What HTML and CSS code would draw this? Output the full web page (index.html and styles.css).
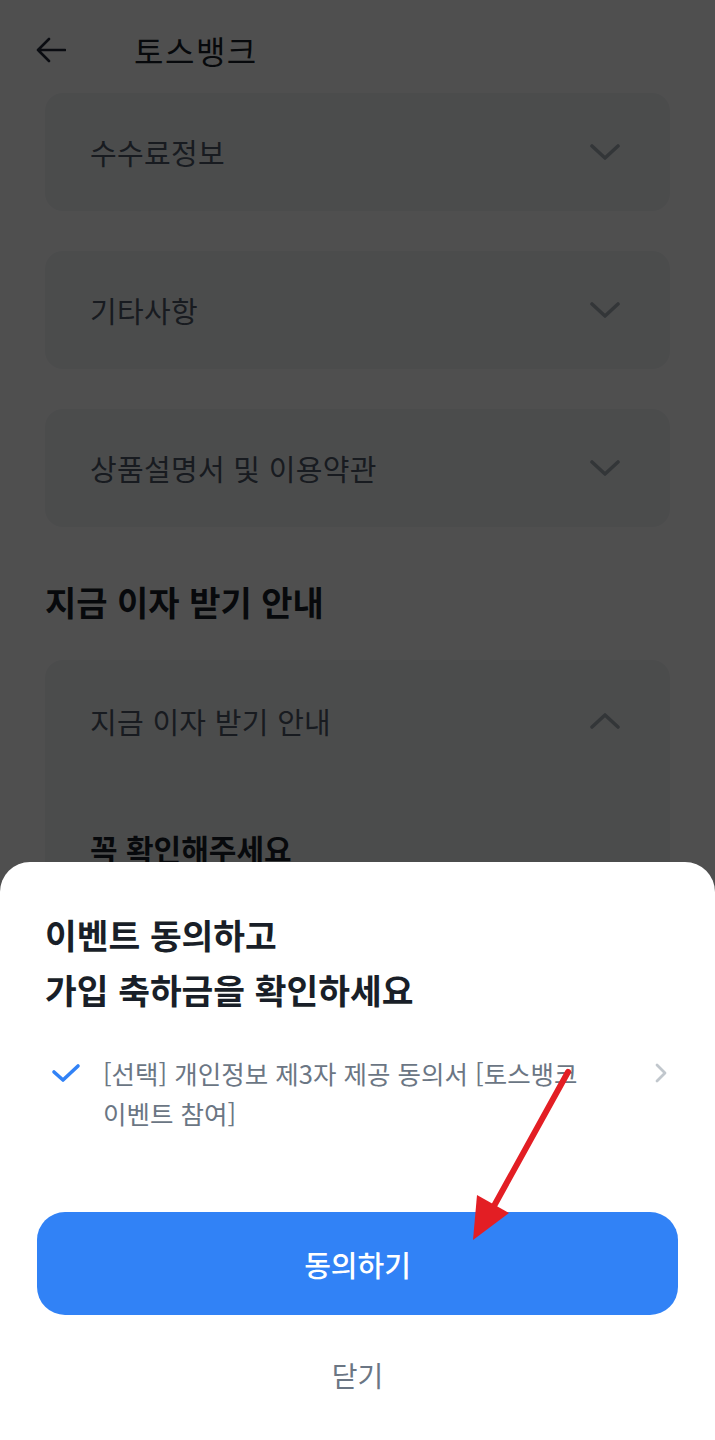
FILE: index.html
```html
<!DOCTYPE html>
<html lang="ko">
<head>
  <meta charset="UTF-8" />
  <meta name="viewport" content="width=device-width, initial-scale=1.0" />
  <title>토스뱅크</title>
  <link rel="stylesheet" href="styles.css">
</head>
<body>
  <header class="topbar">
    <button class="back" aria-label="뒤로">
      <svg width="30" height="28" viewBox="0 0 30 28">
        <path d="M2 14 H29 M13 3 L2 14 L13 25" fill="none" stroke="currentColor" stroke-width="2.6" stroke-linecap="round" stroke-linejoin="round"/>
      </svg>
    </button>
    <h1>토스뱅크</h1>
  </header>

  <main class="content">
    <div class="accordion">
      <div class="accordion-head">
        <span>수수료정보</span>
        <svg class="chev" width="30" height="16" viewBox="0 0 30 16"><path d="M2 2 L15 14 L28 2" /></svg>
      </div>
    </div>
    <div class="accordion">
      <div class="accordion-head">
        <span>기타사항</span>
        <svg class="chev" width="30" height="16" viewBox="0 0 30 16"><path d="M2 2 L15 14 L28 2" /></svg>
      </div>
    </div>
    <div class="accordion">
      <div class="accordion-head">
        <span>상품설명서 및 이용약관</span>
        <svg class="chev" width="30" height="16" viewBox="0 0 30 16"><path d="M2 2 L15 14 L28 2" /></svg>
      </div>
    </div>

    <h2 class="section-title">지금 이자 받기 안내</h2>

    <div class="accordion open">
      <div class="accordion-head tall">
        <span>지금 이자 받기 안내</span>
        <svg class="chev" width="30" height="16" viewBox="0 0 30 16"><path d="M2 14 L15 2 L28 14" /></svg>
      </div>
      <div class="accordion-body">
        <h3>꼭 확인해주세요</h3>
      </div>
    </div>
  </main>

  <div class="dim"></div>

  <section class="sheet">
    <h2 class="sheet-title">이벤트 동의하고<br>가입 축하금을 확인하세요</h2>

    <div class="agree-row">
      <svg class="check" width="30" height="20" viewBox="0 0 30 20">
        <path d="M3 9 L12 17 L27 3" fill="none" stroke="#3182f6" stroke-width="3.6" stroke-linecap="round" stroke-linejoin="round"/>
      </svg>
      <p class="agree-text">[선택] 개인정보 제3자 제공 동의서 [토스뱅크 이벤트 참여]</p>
      <svg class="more" width="14" height="22" viewBox="0 0 14 22">
        <path d="M3 3 L11 11 L3 19" fill="none" stroke="#c1c7cd" stroke-width="2.8" stroke-linecap="round" stroke-linejoin="round"/>
      </svg>
    </div>

    <button class="btn-primary">동의하기</button>
    <button class="btn-close">닫기</button>
  </section>

  <!-- red pointer drawn over the sheet -->
  <svg class="pointer" width="715" height="1440" viewBox="0 0 715 1440">
    <line x1="568" y1="1072" x2="494" y2="1206" stroke="#e31e24" stroke-width="6" stroke-linecap="round"/>
    <polygon points="509,1213 477,1195 473,1240" fill="#e31e24"/>
  </svg>
</body>
</html>
```

FILE: styles.css
```css
:root {
  --blue: #3182f6;
  --grey-50: #f2f4f6;
  --grey-600: #6b7684;
  --grey-700: #4e5968;
  --grey-900: #191f28;
}
* { box-sizing: border-box; margin: 0; padding: 0; }
body {
  font-family: "Noto Sans CJK KR", "Noto Sans", sans-serif;
  background: #fff;
  color: var(--grey-900);
  width: 715px;
  min-height: 1440px;
  overflow: hidden;
  position: relative;
}
button {
  font-family: inherit;
  border: none;
  background: none;
  cursor: pointer;
}

/* top bar */
.topbar {
  display: flex;
  align-items: center;
  height: 60px;
  margin-top: 20px;
  padding: 0 36px;
}
.back {
  color: #202938;
  display: flex;
  width: 30px;
}
.topbar h1 {
  margin-left: 68px;
  font-size: 32px;
  font-weight: 400;
  letter-spacing: 1.5px;
}

/* accordion list */
.content {
  padding: 13px 45px 0;
}
.accordion {
  background: var(--grey-50);
  border-radius: 18px;
  margin-bottom: 40px;
}
.accordion-head {
  display: flex;
  justify-content: space-between;
  align-items: center;
  height: 118px;
  padding: 0 50px 0 45px;
  font-size: 29px;
  letter-spacing: 0.3px;
  color: var(--grey-700);
}
.accordion-head.tall {
  height: 122px;
}
.chev path {
  fill: none;
  stroke: #a5adb6;
  stroke-width: 3.6;
  stroke-linecap: round;
  stroke-linejoin: round;
}
.section-title {
  font-size: 34px;
  font-weight: 700;
  line-height: 46px;
  margin: 52px 0 35px;
}
.accordion-body {
  padding: 46px 45px 60px;
}
.accordion-body h3 {
  font-size: 30px;
  font-weight: 700;
  line-height: 40px;
}

/* dimmed backdrop */
.dim {
  position: fixed;
  inset: 0;
  background: rgba(0, 0, 0, 0.69);
}

/* bottom sheet */
.sheet {
  position: fixed;
  left: 0;
  right: 0;
  bottom: 0;
  background: #fff;
  border-radius: 30px 30px 0 0;
  padding: 45px 37px 45px;
  display: flex;
  flex-direction: column;
}
.sheet-title {
  margin-left: 8px;
  font-size: 34.5px;
  font-weight: 700;
  line-height: 55px;
  color: #191f28;
}
.agree-row {
  display: flex;
  align-items: flex-start;
  margin-top: 36px;
  padding: 0 10px 0 14px;
}
.check {
  flex-shrink: 0;
  margin-top: 10px;
}
.agree-text {
  flex: 1;
  margin: 0 30px 0 22px;
  font-size: 25.5px;
  line-height: 40px;
  color: var(--grey-600);
  word-break: keep-all;
}
.more {
  flex-shrink: 0;
  margin-top: 9px;
}
.btn-primary {
  margin-top: 79px;
  height: 103px;
  border-radius: 28px;
  background: var(--blue);
  color: #fff;
  font-size: 29px;
  font-weight: 500;
}
.btn-close {
  margin-top: 40px;
  height: 40px;
  font-size: 28px;
  line-height: 40px;
  color: var(--grey-600);
}

.pointer {
  position: absolute;
  top: 0;
  left: 0;
  pointer-events: none;
}
```
